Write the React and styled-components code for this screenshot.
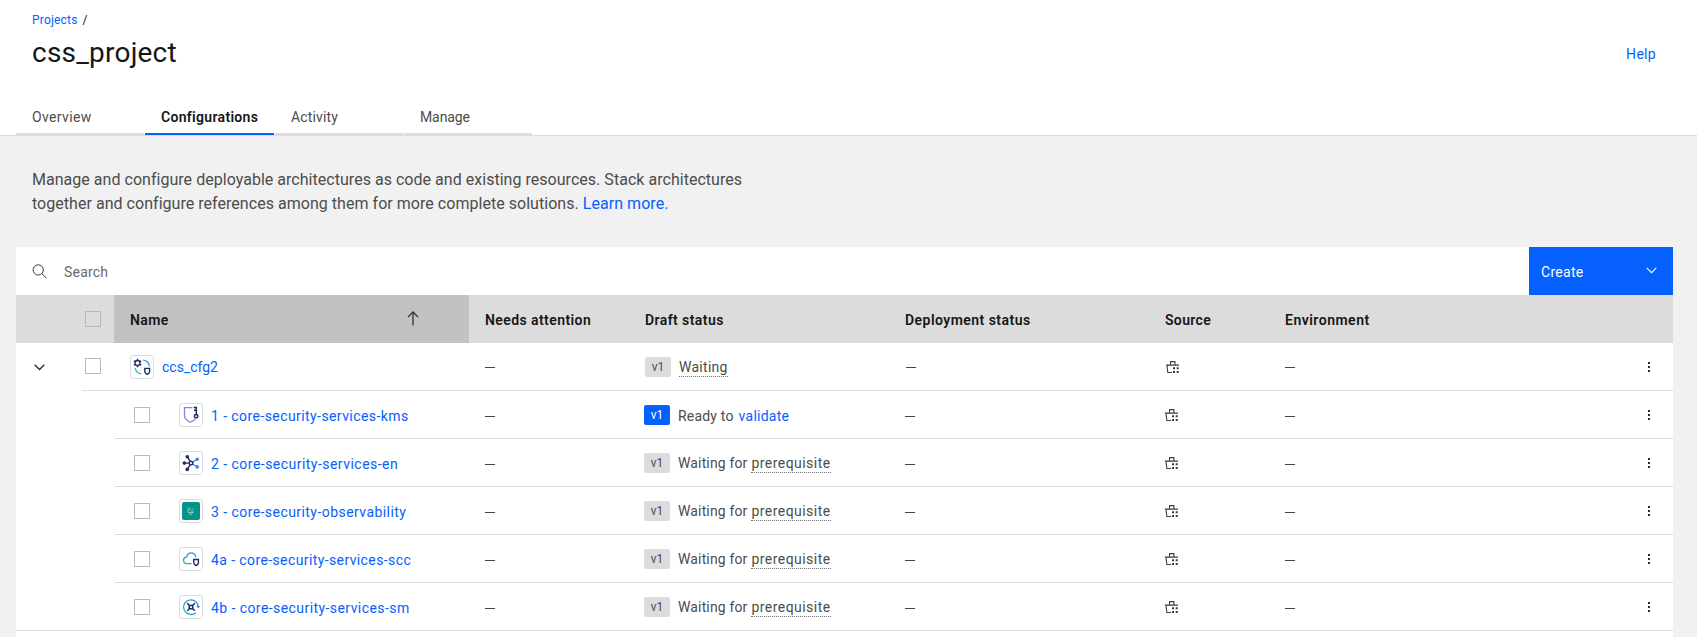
import React from 'react';
import styled, { createGlobalStyle, css } from 'styled-components';

const GlobalStyle = createGlobalStyle`
  * { box-sizing: border-box; }
  body {
    margin: 0;
    background: #f1f1f1;
    color: #4c4c4c;
    font: 400 14px/18px Roboto, "Liberation Sans", sans-serif;
    overflow: hidden;
  }
`;

const colors = {
  blue: '#0560fe',
  ink: '#161616',
  text: '#4c4c4c',
  line: '#dcdcdc',
  header: '#dcdcdc',
  sorted: '#c2c2c2',
};

const tracked = css`
  letter-spacing: ${(p) => p.$ls || 0}px;
  white-space: nowrap;
`;

const Page = styled.div`
  height: 637px;
  overflow: hidden;
  display: flex;
  flex-direction: column;
`;

const PageHeader = styled.header`
  height: 136px;
  background: #fff;
  border-bottom: 1px solid ${colors.line};
  padding: 12px 0 0 16px;
  display: flex;
  flex-direction: column;
`;

const Breadcrumb = styled.nav`
  display: flex;
  gap: 5px;
  padding-left: 16px;
  font-size: 12px;
  line-height: 16px;
  color: ${colors.ink};
`;

const Link = styled.a`
  color: ${colors.blue};
  text-decoration: none;
  ${tracked}
`;

const TitleRow = styled.div`
  display: flex;
  justify-content: space-between;
  align-items: flex-start;
  margin-top: 7px;
  padding: 0 41px 0 16px;
`;

const Title = styled.h1`
  margin: 0;
  font-size: 28px;
  line-height: 36px;
  font-weight: 400;
  color: ${colors.ink};
  ${tracked}
`;

const HelpLink = styled(Link)`
  margin-top: 10px;
`;

const Tabs = styled.div`
  display: flex;
  gap: 1px;
  margin-top: 24px;
`;

const Tab = styled.button`
  width: ${(p) => (p.$active ? 129 : 128)}px;
  height: 40px;
  padding: 13px 0 0 16px;
  border: 0;
  border-bottom: 2px solid ${(p) => (p.$active ? colors.blue : colors.line)};
  background: transparent;
  display: flex;
  font: inherit;
  font-weight: ${(p) => (p.$active ? 600 : 400)};
  color: ${(p) => (p.$active ? colors.ink : colors.text)};
  ${tracked}
`;

const Intro = styled.p`
  margin: 0;
  height: 111px;
  padding: 32px 32px 0;
  font-size: 16px;
  line-height: 24px;
`;

const Line = styled.span`
  ${tracked}
`;

const Panel = styled.main`
  margin: 0 24px 0 16px;
  flex: 1;
  background: #fff;
`;

const Toolbar = styled.div`
  height: 48px;
  display: flex;
  justify-content: space-between;
`;

const SearchField = styled.div`
  display: flex;
  align-items: center;
  gap: 17px;
  padding-left: 16px;
  color: #6a6a6a;

  span { padding-top: 2px; ${tracked} }
`;

const CreateButton = styled.button`
  width: 144px;
  padding: 0 16px 0 12px;
  border: 0;
  background: ${colors.blue};
  color: #fff;
  font: inherit;
  display: flex;
  align-items: center;
  justify-content: space-between;

  span { padding-top: 2px; ${tracked} }
  svg { margin-bottom: 2px; }
`;

const Row = styled.div`
  height: 48px;
  display: flex;
`;

const HeadRow = styled(Row)`
  background: ${colors.header};
  color: ${colors.ink};
  font-weight: 600;
`;

const Lead = styled.div`
  width: ${(p) => p.$width}px;
  display: flex;
  align-items: center;
  justify-content: center;
  padding-right: ${(p) => p.$shift || 0}px;
  border-bottom: ${(p) => (p.$ruled ? `1px solid ${colors.line}` : '0')};
`;

const Cells = styled.div`
  flex: 1;
  display: flex;
  border-bottom: 1px solid ${colors.line};
`;

const Cell = styled.div`
  width: ${(p) => p.$width}px;
  padding-left: ${(p) => p.$pad ?? 16}px;
  padding-top: ${(p) => p.$top ?? 15}px;
  display: flex;
  align-items: flex-start;
  ${tracked}
`;

const SortedCell = styled(Cell)`
  background: ${colors.sorted};
  justify-content: space-between;
  padding-right: 50px;
`;

const Check = styled.span`
  width: 16px;
  height: 16px;
  border: 1px solid #b9b9b9;
`;

const IconTile = styled.span`
  width: 24px;
  height: 24px;
  margin-right: 8px;
  border: 1px solid #dcdcdc;
  border-radius: 3px;
  background: #fff;
  display: flex;
`;

const NameLink = styled(Link)`
  padding-top: ${(p) => p.$drop || 3}px;
`;

const StatusLink = styled(Link)`
  padding-top: 2px;
  margin-left: 1px;
`;

const Dash = styled.span`
  width: 10px;
  height: 1px;
  margin-top: ${(p) => p.$drop}px;
  background: #444;
`;

const Version = styled.span`
  width: 26px;
  height: 20px;
  margin-right: 8px;
  border-radius: 2px;
  background: ${(p) => (p.$active ? colors.blue : '#dcdcdc')};
  color: ${(p) => (p.$active ? '#fff' : colors.text)};
  font-size: 12px;
  line-height: 20px;
  text-align: center;
`;

const StatusText = styled.span`
  padding-top: ${(p) => p.$drop || 1}px;
  margin-right: 4px;
  ${tracked}
`;

const Hint = styled.span`
  height: 20px;
  padding-top: 1px;
  border-bottom: 1px dotted #6f6f6f;
  ${tracked}
`;

const Kebab = styled.span`
  width: 2px;
  margin: 19px 23px 0 auto;
  display: flex;
  flex-direction: column;
  gap: 2px;

  i { width: 2px; height: 2px; background: #2c2c2c; }
`;

const Chevron = ({ light }) => (
  <svg width="11" height="7" viewBox="0 0 11 7" fill="none">
    <path d="M.7 .8 5.5 5.6 10.3 .8" stroke={light ? '#fff' : '#2c2c2c'} strokeWidth={light ? 1.1 : 1.4} />
  </svg>
);

const SearchIcon = () => (
  <svg width="15" height="15" viewBox="0 0 15 15" fill="none" stroke="#3a3a3a">
    <circle cx="6.2" cy="5.9" r="5.1" />
    <path d="M9.8 9.5 14.6 14.3" />
  </svg>
);

const SortIcon = () => (
  <svg width="12" height="15" viewBox="0 0 12 15" fill="none" stroke="#333" strokeWidth="1.3">
    <path d="M6 14.5V1.3M1 6 6 1 11 6" />
  </svg>
);

const SourceIcon = () => (
  <svg width="13" height="12" viewBox="0 0 13 12" fill="none" stroke="#3c3c3c" strokeWidth="1.05">
    <path d="M4.5 3.7V.6H9V3.7M0 4.1H13M1 4.1 1.8 11.4H6" />
    <path d="M7 6.3h2v2H7zM10.7 6.3h2v2h-2zM7 10h2v2H7zM10.7 10h2v2h-2z" fill="#3c3c3c" stroke="none" />
  </svg>
);

const art = {
  stack: (
    <>
      <path d="M13.2 5.2C16.7 5.7 18.9 8 19.4 11.4" stroke="#2f8df5" strokeWidth="1.2" />
      <path d="M5.2 12.9C5.7 16.2 8 18.5 11.5 18.9" stroke="#1fb6c4" strokeWidth="1.2" />
      <circle cx="7.5" cy="8" r="2.5" stroke="#1c2a66" strokeWidth="1.3" />
      <path d="M7.5 5.4V3.8M7.5 10.6v1.6M5.2 6.7 3.9 5.9M9.8 6.7l1.3-.8M5.2 9.3l-1.3.8M9.8 9.3l1.3.8" stroke="#1c2a66" strokeWidth="1.4" />
      <path d="M14.8 13.4h4.8v3.1c0 1.5-1.1 2.2-2.4 2.8-1.3-.6-2.4-1.3-2.4-2.8z" stroke="#1c2a66" strokeWidth="1.4" />
    </>
  ),
  kms: (
    <>
      <linearGradient id="kms" gradientUnits="userSpaceOnUse" x1="9" y1="4" x2="12" y2="20"><stop stopColor="#6f87f8" /><stop offset="1" stopColor="#a56eff" /></linearGradient>
      <path d="M13.2 4.7H5.5v8.4c0 3.1 2.6 4.5 5.8 6.2 2.4-1.3 4-2.2 4.9-3.5" stroke="url(#kms)" strokeWidth="1.3" />
      <path d="M17.3 11.6V4.6H14.6M17.3 7.3H15" stroke="#1c2a66" strokeWidth="1.5" />
      <circle cx="17.1" cy="13.2" r="1.7" stroke="#1c2a66" strokeWidth="1.5" />
    </>
  ),
  network: (
    <>
      <path d="M13.4 11.2 17.4 8.7M13.4 13 17.4 15.3" stroke="#2f8df5" strokeWidth="1.3" />
      <g fill="#2f8df5"><circle cx="18.2" cy="8.2" r="1.8" /><circle cx="18.2" cy="15.9" r="1.8" /></g>
      <path d="M5.4 12.1H10M8.6 6.2 11 10.4M8.6 18 11 13.8" stroke="#1c2a66" strokeWidth="1.4" />
      <circle cx="12" cy="12.1" r="1.8" stroke="#1c2a66" strokeWidth="1.4" />
      <g fill="#1c2a66"><circle cx="8.3" cy="5.7" r="1.8" /><circle cx="5.3" cy="12.1" r="1.8" /><circle cx="8.3" cy="18.4" r="1.8" /></g>
    </>
  ),
  observability: (
    <>
      <rect x="3" y="3" width="18" height="18" rx="2" fill="#009588" />
      <path d="M11.5 9.3H9.2v4.3h5V12M10.5 15.2h3" stroke="#9bd8d2" strokeWidth=".9" />
      <path d="M11 10.8 12.3 12 15 9.4" stroke="#9bd8d2" strokeWidth=".8" />
    </>
  ),
  scc: (
    <>
      <linearGradient id="scc" x1="1" y1="0" x2="0" y2="1"><stop stopColor="#2f86fb" /><stop offset="1" stopColor="#16b9b0" /></linearGradient>
      <path d="M12.5 16.6H8C5.9 16.6 4.5 15.2 4.5 13.3S6 10.2 7.6 10.1C8 7.5 9.7 5.8 12.1 5.8S16.3 7.4 16.8 10.1" stroke="url(#scc)" strokeWidth="1.3" />
      <path d="M14.8 12.5h4.6v3.2c0 1.5-1 2.2-2.3 2.8-1.3-.6-2.3-1.3-2.3-2.8z" stroke="#1c2a66" strokeWidth="1.4" />
    </>
  ),
  secrets: (
    <>
      <linearGradient id="secrets" x1="1" y1="0" x2="0" y2="1"><stop stopColor="#2f7ff8" /><stop offset="1" stopColor="#16b9b0" /></linearGradient>
      <path d="M19.2 12A7.3 7.3 0 1 0 12 19.4c1.9 0 3.5-.6 4.8-1.7" stroke="url(#secrets)" strokeWidth="1.3" />
      <path d="M17.3 11H21.3L19.3 13.3z" fill="#2f7ff8" />
      <path d="M10.3 10.4h3.4v3.3h-3.4zM8.2 8.3l2.1 2.1M15.8 8.3l-2.1 2.1M8.2 15.8l2.1-2.1M15.8 15.8l-2.1-2.1" stroke="#1c2a66" strokeWidth="1.5" />
    </>
  ),
};

const TileIcon = ({ name }) => (
  <IconTile>
    <svg width="22" height="22" viewBox="1 1 22 22" fill="none">{art[name]}</svg>
  </IconTile>
);

const KebabMenu = () => (
  <Kebab>
    <i /><i /><i />
  </Kebab>
);

const members = [
  { name: '1 - core-security-services-kms', ls: 0.42, icon: 'kms', ready: true },
  { name: '2 - core-security-services-en', ls: 0.47, icon: 'network' },
  { name: '3 - core-security-observability', ls: 0.44, icon: 'observability' },
  { name: '4a - core-security-services-scc', ls: 0.395, icon: 'scc' },
  { name: '4b - core-security-services-sm', ls: 0.43, icon: 'secrets' },
];

const MemberRow = ({ item, last }) => (
  <Row>
    <Lead $width={99} $ruled={last} />
    <Cells>
      <Cell $width={64} $pad={19} $top={16}><Check /></Cell>
      <Cell $width={290} $pad={0} $top={12}>
        <TileIcon name={item.icon} />
        <NameLink $ls={item.ls} $drop={4}>{item.name}</NameLink>
      </Cell>
      <Cell $width={160} $pad={15.5} $top={0}><Dash $drop={25} /></Cell>
      <Cell $width={260} $pad={15} $top={14}>
        <Version $active={item.ready}>v1</Version>
        {item.ready ? (
          <>
            <StatusText $ls={0.19} $drop={2}>Ready to</StatusText>
            <StatusLink $ls={0.25}>validate</StatusLink>
          </>
        ) : (
          <>
            <StatusText $ls={0.14}>Waiting for</StatusText>
            <Hint $ls={0.46}>prerequisite</Hint>
          </>
        )}
      </Cell>
      <Cell $width={260} $pad={16} $top={0}><Dash $drop={25} /></Cell>
      <Cell $width={120} $pad={16} $top={18}><SourceIcon /></Cell>
      <Cell $width={120} $pad={16} $top={0}><Dash $drop={25} /></Cell>
      <KebabMenu />
    </Cells>
  </Row>
);

export default function App() {
  return (
    <Page>
      <GlobalStyle />
      <PageHeader>
        <Breadcrumb>
          <Link $ls={0.2}>Projects</Link>
          <span>/</span>
        </Breadcrumb>
        <TitleRow>
          <Title $ls={0.22}>css_project</Title>
          <HelpLink $ls={0.3}>Help</HelpLink>
        </TitleRow>
        <Tabs>
          <Tab $ls={0.35}>Overview</Tab>
          <Tab $active $ls={0.31}>Configurations</Tab>
          <Tab $ls={0.15}>Activity</Tab>
          <Tab $ls={-0.1}>Manage</Tab>
        </Tabs>
      </PageHeader>
      <Intro>
        <Line $ls={0.03}>Manage and configure deployable architectures as code and existing resources. Stack architectures</Line>
        <br />
        <Line $ls={0.036}>together and configure references among them for more complete solutions. </Line>
        <Link $ls={0.05}>Learn more.</Link>
      </Intro>
      <Panel>
        <Toolbar>
          <SearchField $ls={0.2}>
            <SearchIcon />
            <span>Search</span>
          </SearchField>
          <CreateButton $ls={0.3}>
            <span>Create</span>
            <Chevron light />
          </CreateButton>
        </Toolbar>
        <HeadRow>
          <Lead $width={66} />
          <Cell $width={32} $pad={3} $top={16}><Check /></Cell>
          <SortedCell $width={355} $top={16} $ls={0.38}>
            Name
            <SortIcon />
          </SortedCell>
          <Cell $width={160} $top={16} $ls={0.42}>Needs attention</Cell>
          <Cell $width={260} $top={16} $ls={0.42}>Draft status</Cell>
          <Cell $width={260} $top={16} $ls={0.46}>Deployment status</Cell>
          <Cell $width={120} $top={16} $ls={0.33}>Source</Cell>
          <Cell $width={120} $top={16} $ls={0.5}>Environment</Cell>
        </HeadRow>
        <Row>
          <Lead $width={66} $shift={19}><Chevron /></Lead>
          <Cells>
            <Cell $width={32} $pad={3} $top={15}><Check /></Cell>
            <Cell $width={355} $top={12}>
              <TileIcon name="stack" />
              <NameLink>ccs_cfg2</NameLink>
            </Cell>
            <Cell $width={160} $top={0}><Dash $drop={24} /></Cell>
            <Cell $width={260} $top={14}>
              <Version>v1</Version>
              <Hint $ls={0.28}>Waiting</Hint>
            </Cell>
            <Cell $width={260} $pad={17} $top={0}><Dash $drop={24} /></Cell>
            <Cell $width={120} $pad={17} $top={18}><SourceIcon /></Cell>
            <Cell $width={120} $top={0}><Dash $drop={24} /></Cell>
            <KebabMenu />
          </Cells>
        </Row>
        {members.map((item, i) => (
          <MemberRow key={item.name} item={item} last={i === members.length - 1} />
        ))}
      </Panel>
    </Page>
  );
}
